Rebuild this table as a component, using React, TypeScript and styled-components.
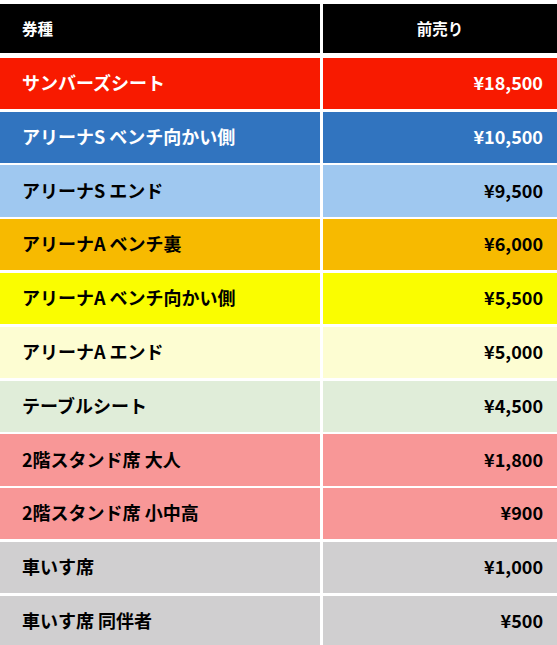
import React from "react";
import styled, { createGlobalStyle } from "styled-components";

const GlobalStyle = createGlobalStyle`
  html, body {
    margin: 0;
    padding: 0;
    background: #ffffff;
  }
  body {
    font-family: "Noto Sans CJK JP", "Noto Sans", sans-serif;
  }
`;

interface Ticket {
  name: string;
  price: string;
  bg: string;
  fg: string;
}

const tickets: Ticket[] = [
  { name: "サンバーズシート", price: "¥18,500", bg: "#f81a00", fg: "#ffffff" },
  { name: "アリーナS ベンチ向かい側", price: "¥10,500", bg: "#3174bf", fg: "#ffffff" },
  { name: "アリーナS エンド", price: "¥9,500", bg: "#9fc8f0", fg: "#000000" },
  { name: "アリーナA ベンチ裏", price: "¥6,000", bg: "#f7ba00", fg: "#000000" },
  { name: "アリーナA ベンチ向かい側", price: "¥5,500", bg: "#fafd00", fg: "#000000" },
  { name: "アリーナA エンド", price: "¥5,000", bg: "#fdfdd2", fg: "#000000" },
  { name: "テーブルシート", price: "¥4,500", bg: "#e0edd9", fg: "#000000" },
  { name: "2階スタンド席 大人", price: "¥1,800", bg: "#f89797", fg: "#000000" },
  { name: "2階スタンド席 小中高", price: "¥900", bg: "#f89797", fg: "#000000" },
  { name: "車いす席", price: "¥1,000", bg: "#d0cfd0", fg: "#000000" },
  { name: "車いす席 同伴者", price: "¥500", bg: "#d0cfd0", fg: "#000000" },
];

const Table = styled.div`
  display: grid;
  grid-template-columns: 320px 1fr;
  grid-auto-rows: 51.3px;
  column-gap: 3px;
  row-gap: 2.5px;
  padding-top: 4px;
  width: 557px;
`;

const HeadCell = styled.div<{ center?: boolean }>`
  display: flex;
  align-items: center;
  justify-content: ${(p) => (p.center ? "center" : "flex-start")};
  height: 49.3px;
  padding: 0 22px 2px;
  box-sizing: border-box;
  background: #000000;
  color: #ffffff;
  font-size: 15.5px;
  font-weight: 700;
`;

const Cell = styled.div<{ bg: string; fg: string; right?: boolean }>`
  display: flex;
  align-items: center;
  justify-content: ${(p) => (p.right ? "flex-end" : "flex-start")};
  padding: ${(p) => (p.right ? "0 14px 3px 0" : "0 0 3px 22px")};
  background: ${(p) => p.bg};
  color: ${(p) => p.fg};
  font-size: 18px;
  font-weight: 700;
  white-space: nowrap;
`;

export default function App() {
  return (
    <>
      <GlobalStyle />
      <Table>
        <HeadCell>券種</HeadCell>
        <HeadCell center>前売り</HeadCell>
        {tickets.map((t) => (
          <React.Fragment key={t.name}>
            <Cell bg={t.bg} fg={t.fg}>{t.name}</Cell>
            <Cell bg={t.bg} fg={t.fg} right>{t.price}</Cell>
          </React.Fragment>
        ))}
      </Table>
    </>
  );
}
